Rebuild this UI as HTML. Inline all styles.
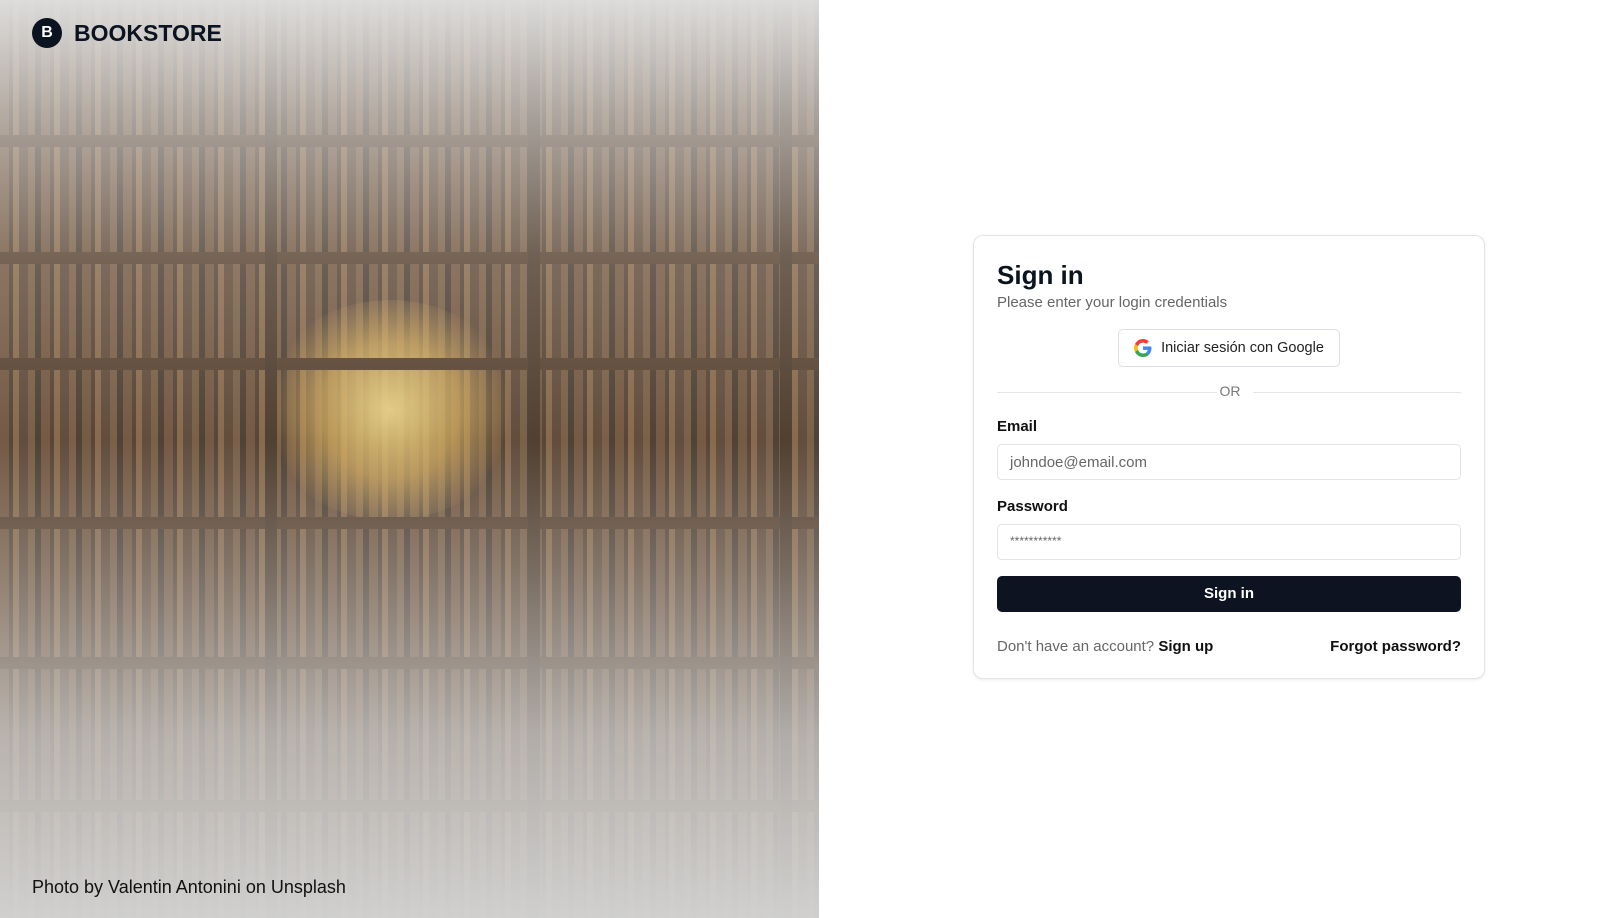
<!DOCTYPE html>
<html><head><meta charset="utf-8"><style>
*{box-sizing:border-box;margin:0;padding:0}
body{width:1617px;height:918px;overflow:hidden;background:#fff;font-family:"Liberation Sans",sans-serif;position:relative}
.left{position:absolute;left:0;top:0;width:819px;height:918px;overflow:hidden;background:#3a2a1c}
.books{position:absolute;left:0;top:0;width:823px;height:918px;
background:
repeating-linear-gradient(90deg,rgba(110,75,45,.95) 0 9px,rgba(70,48,30,.95) 9px 13px,rgba(140,100,60,.9) 13px 19px,rgba(85,58,36,.95) 19px 28px,rgba(120,85,52,.9) 28px 35px,rgba(60,42,27,.95) 35px 41px);}
.shelf{position:absolute;left:0;width:823px;height:12px;background:#4a2f18}
.vd{position:absolute;top:0;width:12px;height:918px;background:#3e2815}
.glow{position:absolute;left:260px;top:300px;width:260px;height:220px;border-radius:50%;background:radial-gradient(circle,rgba(255,225,130,.95) 0,rgba(230,180,80,.7) 40%,rgba(200,140,60,0) 70%)}
.fade{position:absolute;left:0;top:0;width:823px;height:918px;background:linear-gradient(180deg,rgba(225,225,225,.97) 0,rgba(215,215,215,.7) 12%,rgba(200,200,200,.35) 28%,rgba(150,150,150,.22) 48%,rgba(190,190,190,.45) 62%,rgba(205,205,205,.8) 80%,rgba(212,212,212,.97) 100%)}
.logo{position:absolute;left:32px;top:18px;display:flex;align-items:center}
.logo .c{width:30px;height:30px;border-radius:50%;background:#0b1220;color:#fff;font-weight:700;font-size:16px;display:flex;align-items:center;justify-content:center}
.logo .t{margin-left:12px;font-weight:700;font-size:23px;color:#0b1220}
.cap{position:absolute;left:32px;top:877px;font-size:18px;color:#111}
.card{position:absolute;left:973px;top:235px;width:512px;height:444px;border:1px solid #e2e4e8;border-radius:10px;box-shadow:0 1px 3px rgba(0,0,0,.08);background:#fff}
.abs{position:absolute}
h1{position:absolute;left:23px;top:24px;font-size:26px;font-weight:700;color:#0b1220}
.sub{left:23px;top:58px;font-size:15px;color:#666}
.g{left:144px;top:93px;width:222px;height:38px;border:1px solid #dcdfe4;border-radius:5px;display:flex;align-items:center;justify-content:center;font-size:14.5px;color:#222}
.g svg{margin-right:9px}
.line{top:156px;height:1px;background:#e3e5e8}
.or{left:0;width:512px;text-align:center;top:147px;font-size:14px;color:#777}
.lbl{left:23px;font-size:15px;font-weight:700;color:#111}
.inp{left:23px;width:464px;height:36px;border:1px solid #e2e4e8;border-radius:5px;font-size:15px;color:#666;padding:9px 12px}
.btn{left:23px;top:340px;width:464px;height:36px;background:#0e1322;border-radius:5px;color:#fff;font-weight:700;font-size:15px;text-align:center;line-height:36px}
.ft{top:402px;font-size:15px;color:#666}
.ft b{color:#111}
</style></head><body>
<div class="left">
<div class="books"></div>
<div class="glow"></div>
<div class="shelf" style="top:135px"></div>
<div class="shelf" style="top:252px"></div>
<div class="shelf" style="top:358px"></div>
<div class="shelf" style="top:517px"></div>
<div class="shelf" style="top:657px"></div>
<div class="shelf" style="top:800px"></div>
<div class="vd" style="left:265px"></div>
<div class="vd" style="left:528px"></div>
<div class="vd" style="left:780px"></div>
<div class="fade"></div>
<div class="logo"><div class="c">B</div><div class="t">BOOKSTORE</div></div>
<div class="cap">Photo by Valentin Antonini on Unsplash</div>
</div>
<div class="card">
<h1>Sign in</h1>
<div class="abs sub">Please enter your login credentials</div>
<div class="abs g"><svg width="18" height="18" viewBox="0 0 48 48"><path fill="#EA4335" d="M24 9.5c3.5 0 6.6 1.2 9 3.5l6.7-6.7C35.6 2.4 30.2 0 24 0 14.6 0 6.6 5.4 2.7 13.2l7.8 6.1C12.4 13.600 17.7 9.5 24 9.5z"/><path fill="#4285F4" d="M46.5 24.5c0-1.6-.1-3.1-.4-4.5H24v9h12.7c-.6 2.9-2.2 5.4-4.7 7.1l7.6 5.9c4.4-4.1 6.9-10.1 6.9-17.5z"/><path fill="#FBBC05" d="M10.5 28.7c-.5-1.5-.8-3-.8-4.7s.3-3.2.8-4.7l-7.8-6.1C1 16.6 0 20.2 0 24s1 7.4 2.7 10.8l7.8-6.1z"/><path fill="#34A853" d="M24 48c6.5 0 11.9-2.1 15.9-5.8l-7.6-5.9c-2.1 1.4-4.9 2.3-8.3 2.3-6.3 0-11.6-4.2-13.5-9.9l-7.8 6.1C6.6 42.6 14.6 48 24 48z"/></svg>Iniciar sesión con Google</div>
<div class="abs line" style="left:23px;width:220px"></div>
<div class="abs line" style="left:279px;width:208px"></div>
<div class="abs or">OR</div>
<div class="abs lbl" style="top:182px">Email</div>
<div class="abs inp" style="top:208px">johndoe@email.com</div>
<div class="abs lbl" style="top:262px">Password</div>
<div class="abs inp" style="top:288px;font-size:12px;padding-top:9px">***********</div>
<div class="abs btn">Sign in</div>
<div class="abs ft" style="left:23px">Don't have an account? <b>Sign up</b></div>
<div class="abs ft" style="right:23px"><b>Forgot password?</b></div>
</div>
</body></html>
